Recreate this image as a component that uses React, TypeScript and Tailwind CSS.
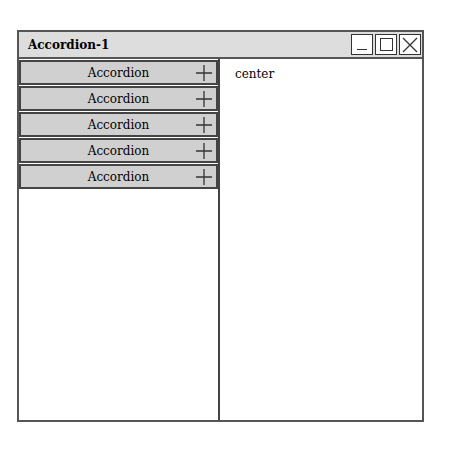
const items = ['Accordion', 'Accordion', 'Accordion', 'Accordion', 'Accordion'];

function Plus() {
  return (
    <svg width="18" height="18" viewBox="0 0 18 18" className="text-[#333]">
      <path d="M9 1 V17 M1 9 H17" stroke="currentColor" strokeWidth="1.3" fill="none" />
    </svg>
  );
}

export default function App() {
  return (
    <div className="w-[453px] h-[461px] bg-white pt-[30px] pl-[17px]" style={{ fontFamily: '"DejaVu Serif", serif' }}>
      <div className="w-[407px] h-[392px] border-2 border-[#555] flex flex-col">
        {/* title bar */}
        <div className="h-[27px] bg-[#dddddd] border-b-2 border-[#555] flex items-center justify-between pl-[9px] pr-[1px]">
          <span className="text-[12px] font-bold text-black">Accordion-1</span>
          <div className="flex gap-[2px]">
            <div className="w-[22px] h-[21px] border border-[#333] bg-white flex items-end justify-center pb-[4px]">
              <div className="w-[10px] h-[1.5px] bg-[#333]" />
            </div>
            <div className="w-[22px] h-[21px] border border-[#333] bg-white flex items-center justify-center">
              <div className="w-[13px] h-[13px] border border-[#333]" />
            </div>
            <div className="w-[22px] h-[21px] border border-[#333] bg-white flex items-center justify-center">
              <svg width="18" height="18" viewBox="0 0 18 18">
                <path d="M2 2 L16 16 M16 2 L2 16" stroke="#333" strokeWidth="1.3" />
              </svg>
            </div>
          </div>
        </div>
        <div className="flex flex-1">
          <div className="w-[201px] border-r-2 border-[#444] flex flex-col gap-[1px] pt-[1px]">
            {items.map((t, i) => (
              <div
                key={i}
                className="h-[25px] bg-[#d0d0d0] border-2 border-[#444] flex items-center justify-center relative"
              >
                <span className="text-[12px] text-black">{t}</span>
                <div className="absolute right-[3px] top-0 bottom-0 flex items-center">
                  <Plus />
                </div>
              </div>
            ))}
          </div>
          <div className="flex-1 pl-[15px] pt-[2px]">
            <span className="text-[12px] text-black">center</span>
          </div>
        </div>
      </div>
    </div>
  );
}
